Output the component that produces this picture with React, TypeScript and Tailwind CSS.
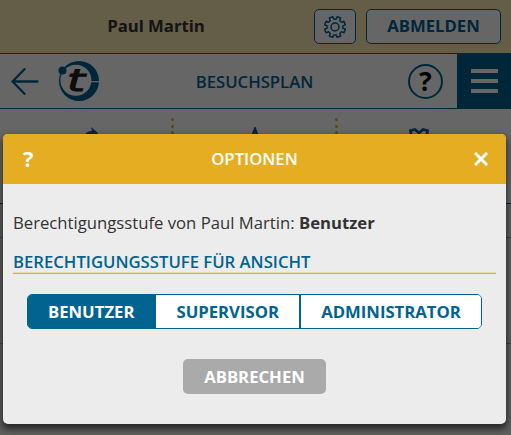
import { ReactNode, useState } from "react";

const roles = ["Benutzer", "Supervisor", "Administrator"];

// outline of an eight-toothed wheel around (11, 11)
function gearPath() {
  const points: string[] = [];
  for (let i = 0; i < 8; i++) {
    const mid = 22.5 + i * 45;
    [[-14, 8], [-10, 10.6], [10, 10.6], [14, 8]].forEach(([offset, r]) => {
      const a = ((mid + offset) * Math.PI) / 180;
      points.push(`${(11 + r * Math.cos(a)).toFixed(2)} ${(11 + r * Math.sin(a)).toFixed(2)}`);
    });
  }
  return `M${points.join("L")}Z`;
}

function GearIcon() {
  return (
    <svg width="22" height="22" viewBox="0 0 22 22" fill="none" stroke="#006390" strokeWidth="1.5" strokeLinejoin="round" className="overflow-visible">
      <path d={gearPath()} />
      <circle cx="11" cy="11" r="4" />
    </svg>
  );
}

function BackIcon() {
  return (
    <svg width="28" height="27" viewBox="0 0 28 27" fill="none" stroke="#006390" strokeWidth="2.3" strokeLinecap="round">
      <path d="M13.5 1.2 1.5 13.5 13.5 25.8M1.5 13.5H26.5" />
    </svg>
  );
}

function Logo() {
  return (
    <svg width="40" height="40" viewBox="0 0 40 40" className="overflow-visible">
      <path
        fill="#006390"
        fillRule="evenodd"
        d="M20 0a20 20 0 1 1 0 40a20 20 0 1 1 0-40M16.9 3.7a15.5 15.5 0 1 0 0 31a15.5 15.5 0 1 0 0-31"
      />
      <circle cx="3.5" cy="9.5" r="4" fill="#006390" />
      <path d="M31.5 20.7h9" stroke="#fff" strokeWidth="1.2" />
      <text
        x="8"
        y="30"
        fill="#222"
        stroke="#222"
        strokeWidth="1"
        fontFamily="DejaVu Sans, sans-serif"
        fontSize="30"
        fontStyle="italic"
        textLength="18"
        lengthAdjust="spacingAndGlyphs"
      >
        t
      </text>
    </svg>
  );
}

function Dots() {
  return (
    <div className="flex w-[3px] flex-col gap-[3.6px] overflow-hidden">
      {Array.from({ length: 11 }).map((_, i) => (
        <span key={i} className="size-[3px] shrink-0 rounded-full bg-[#e5ae22]" />
      ))}
    </div>
  );
}

function Tab({ children }: { children: ReactNode }) {
  return <div className="flex flex-1 justify-center pt-[9px]">{children}</div>;
}

function Page() {
  return (
    <div className="flex h-full flex-col bg-white">
      <header className="flex h-[54px] shrink-0 items-center border-b border-[#006390] bg-[#fbe8b5] pr-[10px]">
        <span className="flex-1 pb-[2px] pr-[2px] text-center text-[16.7px] font-bold text-[#333]">Paul Martin</span>
        <button className="mr-[10px] flex h-[35px] w-[42px] items-center justify-center rounded-[5px] border border-[#006390] bg-white">
          <GearIcon />
        </button>
        <button className="h-[35px] w-[135px] rounded-[5px] border border-[#006390] bg-white pb-[2px] text-[16.7px] font-bold text-[#006390]">
          ABMELDEN
        </button>
      </header>

      <nav className="flex h-[55px] shrink-0 items-center border-b border-[#006390] pl-[11px]">
        <BackIcon />
        <div className="ml-[20px]">
          <Logo />
        </div>
        <h1 className="flex-1 pt-px pl-[2px] text-center text-[16.7px] font-semibold text-[#006390]">BESUCHSPLAN</h1>
        <div className="mr-[14px] flex size-[35px] items-center justify-center rounded-full border-2 border-[#006390] text-[26px] font-bold leading-none">
          ?
        </div>
        <div className="flex h-[55px] w-[54px] flex-col items-center justify-center gap-[6px] bg-[#006390]">
          <span className="h-1 w-[27px] bg-white" />
          <span className="h-1 w-[27px] bg-white" />
          <span className="h-1 w-[27px] bg-white" />
        </div>
      </nav>

      <div className="flex h-[95px] shrink-0 border-b border-[#006390] py-[9px] pl-[10px] pr-[12px]">
        <Tab>
          <svg width="18" height="20" viewBox="0 0 18 20" fill="#006390">
            <path d="M9 0 16 6 10 12V8C6 8 3 10 1 15 1 8 4 4 10 4z" />
          </svg>
        </Tab>
        <Dots />
        <Tab>
          <svg width="20" height="20" viewBox="0 0 20 20" fill="none" stroke="#006390" strokeWidth="2.5">
            <path d="M10 2 12.5 9H19L14 13 16 19 10 15 4 19 6 13 1 9H7.5z" />
          </svg>
        </Tab>
        <Dots />
        <Tab>
          <svg width="20" height="22" viewBox="0 0 20 22" fill="none" stroke="#006390" strokeWidth="2.8">
            <path d="M2 20V7L1.5 3.5 6 2.5 10 6 14 2.5 18.5 3.5 18 7V20z" />
          </svg>
        </Tab>
      </div>
      <div className="h-[34px] shrink-0 border-b border-[#aaa] bg-[#eee]" />
      <div className="h-[106px] shrink-0 border-b border-[#aaa] bg-[#eee]" />
      <div className="flex-1 bg-[#eee]" />
    </div>
  );
}

export default function App() {
  const [role, setRole] = useState("Benutzer");

  return (
    <div className="relative h-[435px] w-[511px] overflow-hidden font-['Open_Sans',sans-serif]">
      <Page />
      <div className="absolute inset-0 bg-black/60" />

      <section className="absolute top-[134px] left-[3px] h-[290px] w-[503px] overflow-hidden rounded-[5px] bg-[#ececec] shadow-[0_4px_7px_1px_rgba(0,0,0,0.6)]">
        <header className="flex h-[50px] items-center justify-between bg-[#e5ae22] pr-[18px] pl-[20px] text-white">
          <span className="w-[12px] pb-[2px] text-[22px] font-bold">?</span>
          <h2 className="text-[16.7px] font-semibold">OPTIONEN</h2>
          <svg width="14" height="14" viewBox="0 0 14 14" stroke="currentColor" strokeWidth="3">
            <path d="M1 1 13 13M13 1 1 13" />
          </svg>
        </header>

        <div className="px-[10px] pt-[26px] text-[16.7px] text-[#333]">
          <p className="leading-[26px]">
            Berechtigungsstufe von Paul Martin: <strong className="font-bold">Benutzer</strong>
          </p>
          <h3 className="mt-[14px] h-[24px] border-b border-b-[#e5ae22] leading-[24px] font-semibold text-[#006390] shadow-[inset_0_-1px_0_#ead9a9]">
            BERECHTIGUNGSSTUFE FÜR ANSICHT
          </h3>

          <div className="mx-[14px] mt-[20px] flex h-[35px] overflow-hidden rounded-[5px] border border-[#006390] font-bold">
            {roles.map((r) => (
              <button
                key={r}
                onClick={() => setRole(r)}
                className={`border-r-2 border-[#006390] px-[20px] uppercase last:flex-1 last:border-r-0 ${
                  r === role ? "bg-[#006390] text-white" : "bg-white text-[#006390]"
                }`}
              >
                {r}
              </button>
            ))}
          </div>

          <button className="mx-auto mt-[30px] block h-[35px] w-[143px] rounded-[5px] bg-[#aaa] font-bold text-white">
            ABBRECHEN
          </button>
        </div>
      </section>
    </div>
  );
}
